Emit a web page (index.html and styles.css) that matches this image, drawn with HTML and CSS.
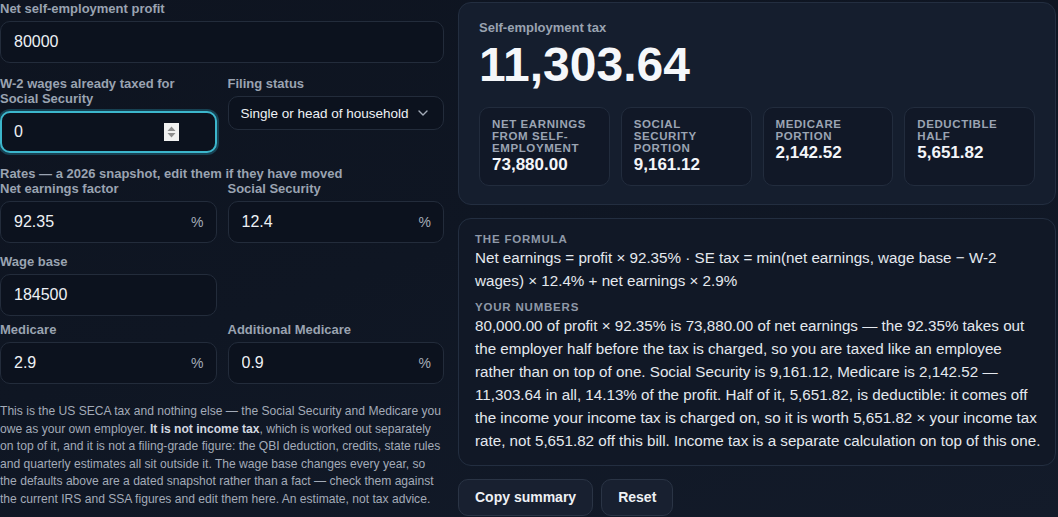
FILE: index.html
```html
<!DOCTYPE html>
<html lang="en">
<head>
<meta charset="utf-8">
<title>Self-employment tax</title>
<link rel="stylesheet" href="styles.css">
</head>
<body>
<main class="page">
  <section class="inputs">
    <div class="field">
      <label class="label" for="profit">Net self-employment profit</label>
      <div class="box"><input id="profit" class="control" type="text" inputmode="decimal" value="80000"></div>
    </div>

    <div class="row row-top">
      <div class="field">
        <label class="label label-wrap" for="w2">W-2 wages already taxed for Social Security</label>
        <div class="box box-focus">
          <input id="w2" class="control" type="text" inputmode="decimal" value="0">
          <span class="spin" aria-hidden="true">
            <svg width="15" height="18" viewBox="0 0 15 18"><rect width="15" height="18" fill="#f1f1f1"/><polygon points="3.5,8 7.5,3.5 11.5,8" fill="#8e8e8e"/><polygon points="3.5,10 7.5,14.5 11.5,10" fill="#8e8e8e"/></svg>
          </span>
        </div>
      </div>
      <div class="field">
        <label class="label" for="status">Filing status</label>
        <div class="box box-select">
          <select id="status" class="control select">
            <option>Single or head of household</option>
            <option>Married filing jointly</option>
            <option>Married filing separately</option>
          </select>
          <svg class="chev" width="10" height="6" viewBox="0 0 10 6" aria-hidden="true"><polyline points="1,1 5,5 9,1" fill="none" stroke="#a3abb8" stroke-width="1.4" stroke-linecap="round" stroke-linejoin="round"/></svg>
        </div>
      </div>
    </div>

    <h2 class="rates-title">Rates — a 2026 snapshot, edit them if they have moved</h2>
    <div class="row">
      <div class="field">
        <label class="label" for="nef">Net earnings factor</label>
        <div class="box"><input id="nef" class="control" type="text" value="92.35"><span class="suffix">%</span></div>
      </div>
      <div class="field">
        <label class="label" for="ss">Social Security</label>
        <div class="box"><input id="ss" class="control" type="text" value="12.4"><span class="suffix">%</span></div>
      </div>
    </div>
    <div class="row row-wage">
      <div class="field">
        <label class="label" for="wb">Wage base</label>
        <div class="box"><input id="wb" class="control" type="text" value="184500"></div>
      </div>
    </div>
    <div class="row row-med">
      <div class="field">
        <label class="label" for="med">Medicare</label>
        <div class="box"><input id="med" class="control" type="text" value="2.9"><span class="suffix">%</span></div>
      </div>
      <div class="field">
        <label class="label" for="amed">Additional Medicare</label>
        <div class="box"><input id="amed" class="control" type="text" value="0.9"><span class="suffix">%</span></div>
      </div>
    </div>

    <p class="note">This is the US SECA tax and nothing else — the Social Security and Medicare you owe as your own employer. <strong>It is not income tax</strong>, which is worked out separately on top of it, and it is not a filing-grade figure: the QBI deduction, credits, state rules and quarterly estimates all sit outside it. The wage base changes every year, so the defaults above are a dated snapshot rather than a fact — check them against the current IRS and SSA figures and edit them here. An estimate, not tax advice.</p>
  </section>

  <section class="results">
    <div class="card hero">
      <div class="hero-label">Self-employment tax</div>
      <div class="hero-value">11,303.64</div>
      <div class="stats">
        <div class="stat"><div class="stat-label">Net earnings from self-employment</div><div class="stat-value">73,880.00</div></div>
        <div class="stat"><div class="stat-label">Social security portion</div><div class="stat-value">9,161.12</div></div>
        <div class="stat"><div class="stat-label">Medicare portion</div><div class="stat-value">2,142.52</div></div>
        <div class="stat"><div class="stat-label">Deductible half</div><div class="stat-value">5,651.82</div></div>
      </div>
    </div>

    <div class="card formula">
      <div class="eyebrow">The formula</div>
      <p class="formula-text">Net earnings = profit × 92.35% · SE tax = min(net earnings, wage base − W-2 wages) × 12.4% + net earnings × 2.9%</p>
      <div class="eyebrow eyebrow-2">Your numbers</div>
      <p class="formula-text">80,000.00 of profit × 92.35% is 73,880.00 of net earnings — the 92.35% takes out the employer half before the tax is charged, so you are taxed like an employee rather than on top of one. Social Security is 9,161.12, Medicare is 2,142.52 — 11,303.64 in all, 14.13% of the profit. Half of it, 5,651.82, is deductible: it comes off the income your income tax is charged on, so it is worth 5,651.82 × your income tax rate, not 5,651.82 off this bill. Income tax is a separate calculation on top of this one.</p>
    </div>

    <div class="actions">
      <button class="btn" type="button">Copy summary</button>
      <button class="btn" type="button">Reset</button>
    </div>
  </section>
</main>
</body>
</html>
```

FILE: styles.css
```css
* { box-sizing: border-box; }

html, body {
  margin: 0;
  height: 100%;
}

body {
  font-family: "Liberation Sans", Arial, sans-serif;
  color: #e6eaf0;
  background: #0f1622;
  background-image: linear-gradient(160deg, #0e1420 0%, #0f1623 45%, #131b2a 100%);
  overflow: hidden;
}

.page {
  display: grid;
  grid-template-columns: 444px 598px;
  column-gap: 14px;
  align-items: start;
  padding-top: 1px;
}

/* ---------- left column ---------- */

.inputs {
  min-width: 0;
}

.label {
  display: block;
  font-size: 13px;
  font-weight: 700;
  line-height: 15px;
  color: #9aa3b1;
  margin-bottom: 5px;
}

.label-wrap {
  padding-right: 10px;
}

.box {
  display: flex;
  align-items: center;
  width: 100%;
  height: 42px;
  padding: 0 12px 0 13px;
  border: 1px solid #232c3b;
  border-radius: 10px;
  background: #0c121e;
}

.box-focus {
  border: 2px solid #3cb6cc;
  padding-left: 12px;
  padding-right: 11px;
  box-shadow: 0 0 0 2px rgba(40, 150, 175, 0.35);
}

.box-select {
  height: 34px;
  padding-left: 12px;
  padding-right: 15px;
}

.control {
  flex: 1 1 0;
  width: 0;
  min-width: 0;
  padding: 0;
  border: 0;
  outline: 0;
  background: transparent;
  color: #eef1f5;
  font-family: inherit;
  font-size: 16px;
}

.select {
  font-size: 13.5px;
  appearance: none;
  -webkit-appearance: none;
  cursor: pointer;
}

.select option {
  background: #111827;
  color: #eef1f5;
}

.chev {
  flex: none;
  display: block;
}

.spin {
  flex: none;
  display: block;
  width: 15px;
  height: 18px;
  margin-right: 25px;
}

.spin svg { display: block; }

.suffix {
  flex: none;
  font-size: 14px;
  color: #a4acb8;
}

.row {
  display: grid;
  grid-template-columns: minmax(0, 1fr) minmax(0, 1fr);
  column-gap: 11px;
  align-items: start;
}

.field {
  min-width: 0;
}

.row-top { margin-top: 13px; }
.row-wage { margin-top: 11px; }
.row-med { margin-top: 6px; }

.rates-title {
  margin: 13px 0 0;
  font-size: 13px;
  font-weight: 700;
  line-height: 15px;
  color: #9aa3b1;
}

.note {
  margin: 19px 0 0;
  font-size: 12.1px;
  line-height: 17.5px;
  color: #a3abb8;
}

.note strong {
  color: #d3d8e0;
}

/* ---------- right column ---------- */

.results {
  display: flex;
  flex-direction: column;
  gap: 13px;
  padding-top: 1px;
  min-width: 0;
}

.card {
  border: 1px solid #232e40;
  border-radius: 13px;
}

.hero {
  background: #151e2e;
  padding: 17px 20px 18px;
}

.hero-label {
  font-size: 13px;
  font-weight: 700;
  line-height: 15px;
  color: #9aa3b1;
}

.hero-value {
  margin-top: 6px;
  font-size: 48px;
  font-weight: 700;
  line-height: 48px;
  color: #f5f7fa;
}

.stats {
  display: grid;
  grid-template-columns: repeat(4, minmax(0, 1fr));
  column-gap: 11px;
  margin-top: 18px;
}

.stat {
  background: #111827;
  border: 1px solid #222c3d;
  border-radius: 10px;
  padding: 10px 10px 11px 12px;
}

.stat-label {
  font-size: 11.5px;
  font-weight: 700;
  line-height: 12px;
  letter-spacing: 0.6px;
  text-transform: uppercase;
  color: #9ba4b3;
}

.stat-value {
  margin-top: 2px;
  font-size: 17px;
  font-weight: 700;
  line-height: 18px;
  color: #f3f5f9;
}

.formula {
  background: #111826;
  padding: 14px 14px 13px 16px;
}

.eyebrow {
  font-size: 11.5px;
  font-weight: 700;
  line-height: 13px;
  letter-spacing: 0.8px;
  text-transform: uppercase;
  color: #8f99a8;
}

.eyebrow-2 { margin-top: 9px; }

.formula-text {
  margin: 0;
  font-size: 15.2px;
  line-height: 23px;
  color: #e4e8ee;
}

.actions {
  display: flex;
  gap: 8px;
}

.btn {
  padding: 9px 16px;
  border: 1px solid #2a3445;
  border-radius: 10px;
  background: #182030;
  color: #eef1f5;
  font-family: inherit;
  font-size: 14px;
  font-weight: 700;
  line-height: 17px;
  cursor: pointer;
}
```
